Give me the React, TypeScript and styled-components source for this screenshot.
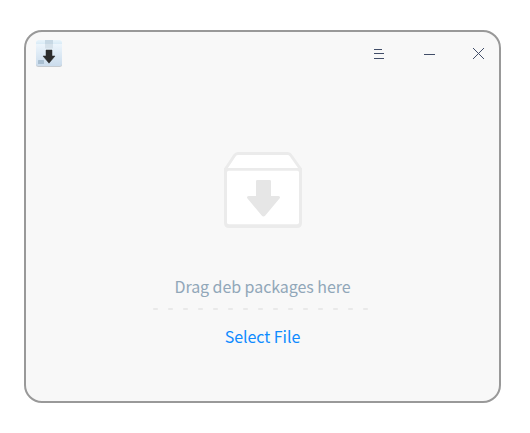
import React from "react";
import styled, { createGlobalStyle } from "styled-components";

const GlobalStyle = createGlobalStyle`
  * { box-sizing: border-box; }
  body { margin: 0; background: #fff; overflow: hidden; }
`;

const Desktop = styled.div`
  display: flex;
  width: 530px;
  height: 433px;
  padding: 30px 29px 30px 24px;
`;

const Window = styled.main`
  display: flex;
  flex-direction: column;
  width: 477px;
  height: 373px;
  border: 2px solid #999;
  border-radius: 18px;
  background: #f8f8f8;
  font-family: "Noto Sans CJK SC", "Noto Sans", sans-serif;
`;

const TitleBar = styled.header`
  display: flex;
  justify-content: space-between;
  height: 44px;
  padding: 8px 12px 0 10px;
`;

const Controls = styled.div`
  display: flex;
  gap: 34px;
  padding-top: 6px;
`;

const ControlButton = styled.button`
  display: flex;
  width: 16px;
  height: 16px;
  padding: 0;
  border: 0;
  background: none;
  color: #414d68;
`;

const DropArea = styled.section`
  display: flex;
  flex-direction: column;
  align-items: center;
  flex: 1;
  padding-top: 76px;
`;

const Hint = styled.p`
  margin: 45px 0 0;
  height: 26px;
  font-size: 16px;
  line-height: 26px;
  white-space: nowrap;
  letter-spacing: -0.06px;
  color: #91a7b9;
`;

const Divider = styled.div`
  display: flex;
  gap: 10px;
  margin: 9px 4px 0 0;
`;

const Dash = styled.span`
  width: 5px;
  height: 2px;
  border-radius: 1px;
  background: #e9e9e9;
`;

const SelectButton = styled.button`
  height: 26px;
  margin-top: 13px;
  padding: 0;
  border: 0;
  background: none;
  font: inherit;
  font-size: 16px;
  line-height: 26px;
  letter-spacing: -0.06px;
  color: #0f8bff;
`;

const AppIcon = () => (
  <svg width="26" height="27" viewBox="0 0 26 27">
    <defs>
      <linearGradient id="carton" x1="0" y1="0" x2="0" y2="1">
        <stop offset="0" stopColor="#f3faff" />
        <stop offset="1" stopColor="#cbdcec" />
      </linearGradient>
      <linearGradient id="lid" x1="0" y1="0" x2="0" y2="1">
        <stop offset="0" stopColor="#e9f4fb" />
        <stop offset="1" stopColor="#d9ebf6" />
      </linearGradient>
    </defs>
    <rect y="1" width="26" height="26" rx="2.5" fill="#c6cbd0" />
    <rect width="26" height="26" rx="2.5" fill="url(#carton)" />
    <path d="M2 0H24L26 2V4H0V2Z" fill="url(#lid)" />
    <path d="M9 0H17V8L16 9L15 8L14 9L13 8L12 9L11 8L10 9L9 8Z" fill="#d5e1ea" />
    <rect x="9" width="8" height="4" fill="#c7d8e4" />
    <rect x="2" y="20" width="6" height="4" rx=".5" fill="#a9bfd1" />
    <path d="M10 10H16V16H19L13 23.2L7 16H10Z" fill="#2c2c2c" stroke="#2c2c2c" strokeWidth=".5" strokeLinejoin="round" />
  </svg>
);

const PackageIcon = () => (
  <svg width="78" height="76" viewBox="0 0 78 76">
    <path d="M1.5 17L10.5 3.5Q11.8 1.5 14 1.5H63.5Q65.7 1.5 67 3.5L76.5 17V70.5Q76.5 74.2 72.8 74.2H5.2Q1.5 74.2 1.5 70.5Z" fill="#fff" />
    <path d="M1.5 17L10.5 3.5Q11.8 1.5 14 1.5H63.5Q65.7 1.5 67 3.5L76.5 17" fill="none" stroke="#ebebeb" strokeWidth="3" />
    <path fillRule="evenodd" d="M0 16H78V71Q78 76 73 76H5Q0 76 0 71ZM3 20.5V70.5Q3 72.3 4.8 72.3H73.2Q75 72.3 75 70.5V20.5Q75 18.8 73.3 18.8H4.7Q3 18.8 3 20.5Z" fill="#ebebeb" />
    <path d="M33.3 28H45.7Q47 28 47 29.3V44H54.4Q57 44.5 55.5 46.6L41.3 63.4Q39.5 65.7 37.7 63.4L23.5 46.6Q22 44.5 24.6 44H32V29.3Q32 28 33.3 28Z" fill="#e6e6e6" />
  </svg>
);

const MenuIcon = () => (
  <svg width="16" height="16" shapeRendering="crispEdges" fill="currentColor">
    <rect x="3" y="3" width="8" height="1" />
    <rect x="3" y="7" width="10" height="1" />
    <rect x="3" y="12" width="10" height="1" />
  </svg>
);

const MinimizeIcon = () => (
  <svg width="16" height="16" shapeRendering="crispEdges" fill="currentColor">
    <rect x="3" y="8" width="11" height="1" />
  </svg>
);

const CloseIcon = () => (
  <svg width="16" height="16" shapeRendering="crispEdges" fill="none" stroke="currentColor">
    <path d="M2 2L13 13M13 2L2 13" />
  </svg>
);

export default function App() {
  return (
    <>
      <GlobalStyle />
      <Desktop>
        <Window>
          <TitleBar>
            <AppIcon />
            <Controls>
              <ControlButton aria-label="Menu"><MenuIcon /></ControlButton>
              <ControlButton aria-label="Minimize"><MinimizeIcon /></ControlButton>
              <ControlButton aria-label="Close"><CloseIcon /></ControlButton>
            </Controls>
          </TitleBar>
          <DropArea>
            <PackageIcon />
            <Hint>Drag deb packages here</Hint>
            <Divider>
              {Array.from({ length: 15 }, (_, i) => <Dash key={i} />)}
            </Divider>
            <SelectButton>Select File</SelectButton>
          </DropArea>
        </Window>
      </Desktop>
    </>
  );
}
